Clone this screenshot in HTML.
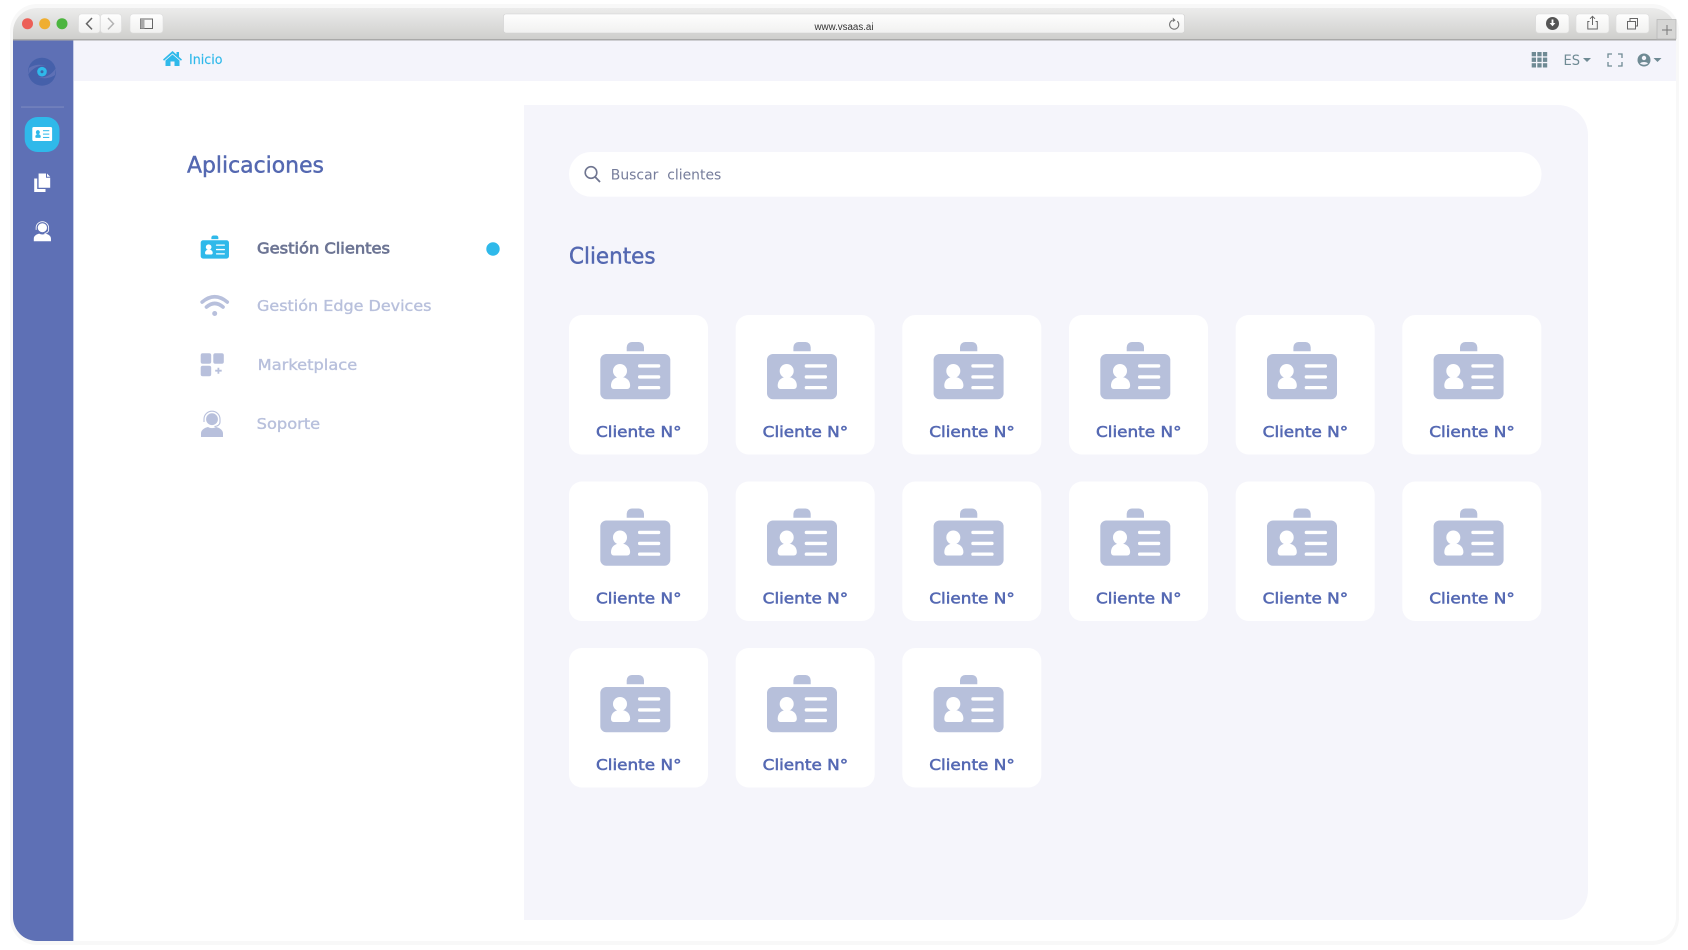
<!DOCTYPE html>
<html lang="es">
<head>
<meta charset="utf-8">
<title>vsaas</title>
<style>
html,body{margin:0;padding:0;background:#fff;width:1688px;height:950px;overflow:hidden}
svg{display:block}
text{font-family:"DejaVu Sans","Liberation Sans",sans-serif}
.cl{font-size:15.5px;fill:#5569b3;stroke:#5569b3;stroke-width:.55}
.m{font-size:15px;stroke-width:.35}
</style>
</head>
<body>
<svg xmlns="http://www.w3.org/2000/svg" width="1688" height="950" viewBox="0 0 1688 950">
<defs>
<linearGradient id="tb" x1="0" y1="0" x2="0" y2="1"><stop offset="0" stop-color="#ececec"/><stop offset="1" stop-color="#cfcfcd"/></linearGradient>
<linearGradient id="btn" x1="0" y1="0" x2="0" y2="1"><stop offset="0" stop-color="#fefefe"/><stop offset="1" stop-color="#f1f1f0"/></linearGradient>
<clipPath id="fr"><rect x="13" y="8" width="1663" height="933" rx="24"/></clipPath>
<g id="idc">
<rect x="0" y="0" width="70" height="45.3" rx="6" fill="currentColor"/>
<path d="M26.400-2.800v-4a5.200 5.200 0 0 1 5.200-5.200h6.900a5.200 5.200 0 0 1 5.200 5.200v4z" fill="currentColor"/>
<circle cx="19.700" cy="17" r="7" fill="var(--k)"/>
<path d="M10.700 31.500c0-5 3.500-8.500 9.500-8.500s9.600 3.500 9.600 8.500c0 2-1 3.500-3 3.500H13.500c-2 0-2.800-1.500-2.800-3.500z" fill="var(--k)"/>
<rect x="37.700" y="10.300" width="22.300" height="3.300" rx="1.600" fill="var(--k)"/>
<rect x="37.700" y="21.300" width="22.300" height="3.300" rx="1.600" fill="var(--k)"/>
<rect x="37.700" y="32" width="22.300" height="3.300" rx="1.600" fill="var(--k)"/>
</g>
<g id="sup">
<circle cx="11" cy="8.200" r="5.900" fill="currentColor"/>
<path d="M3 11V8.200a8 8 0 0 1 16 0V11c0 2.500-2.500 4.400-5.500 4.600" fill="none" stroke="currentColor" stroke-width="1.100"/>
<path d="M0 26v-3.500c0-3.800 3.800-5.800 7-6.500c2.500 1.500 5.500 1.500 8 0c3.200.7 7 2.700 7 6.500V26z" fill="currentColor"/>
</g>
<g id="card">
<rect width="139" height="139.500" rx="13" fill="#fff"/>
<use href="#idc" x="31.300" y="39" style="color:#b7c0db;--k:#fff"/>
</g>
</defs>

<!-- outer frame -->
<rect x="10" y="4" width="1669" height="941" rx="27" fill="#f8f8f8"/>
<g clip-path="url(#fr)">
<rect x="13" y="8" width="1663" height="933" fill="#fff"/>
<!-- title bar -->
<rect x="13" y="8" width="1663" height="31" fill="url(#tb)"/>
<rect x="13" y="39" width="1663" height="1.500" fill="#a9a9a8"/>
<!-- sidebar -->
<rect x="13" y="40.500" width="60" height="901" fill="#5e70b5"/>
<rect x="73" y="40.500" width="1" height="901" fill="#c5cce6"/>
<!-- top bar -->
<rect x="74" y="40.500" width="1602" height="40.500" fill="#f4f4fb"/>
</g>

<!-- traffic lights -->
<circle cx="27.500" cy="23.700" r="5.500" fill="#ec5f57"/>
<circle cx="44.700" cy="23.700" r="5.500" fill="#efae30"/>
<circle cx="62" cy="23.700" r="5.500" fill="#4cb53f"/>
<!-- nav buttons -->
<rect x="78.500" y="14" width="21.500" height="19" rx="3" fill="url(#btn)" stroke="#dcdcdc" stroke-width=".6"/>
<rect x="100.500" y="14" width="21" height="19" rx="3" fill="url(#btn)" stroke="#dcdcdc" stroke-width=".6"/>
<path d="M92 18l-5.500 5.700 5.500 5.700" fill="none" stroke="#666" stroke-width="1.500"/>
<path d="M108 18l5.500 5.700-5.500 5.700" fill="none" stroke="#b4b4b4" stroke-width="1.500"/>
<rect x="130" y="14" width="33" height="19" rx="3" fill="url(#btn)" stroke="#dcdcdc" stroke-width=".6"/>
<rect x="140.500" y="19" width="12" height="9.500" fill="none" stroke="#666" stroke-width="1"/>
<rect x="140.500" y="19" width="4" height="9.500" fill="#a9a9a9"/>
<!-- address bar -->
<rect x="503.500" y="14" width="681" height="19" rx="2.500" fill="url(#btn)" stroke="#d0d0d0" stroke-width=".6"/>
<text x="814.500" y="30" font-size="10" fill="#333" textLength="59" lengthAdjust="spacingAndGlyphs" style="font-family:'Liberation Sans',sans-serif">www.vsaas.ai</text>
<path d="M1172.500 20.300a4.600 4.600 0 1 0 4.800.9" fill="none" stroke="#777" stroke-width="1.100"/>
<path d="M1172.800 17.500l2.800 2.700-2.800 2z" fill="#777"/>
<!-- right browser buttons -->
<rect x="1535.700" y="14" width="33.300" height="19" rx="3" fill="url(#btn)" stroke="#dcdcdc" stroke-width=".6"/>
<rect x="1576" y="14" width="33" height="19" rx="3" fill="url(#btn)" stroke="#dcdcdc" stroke-width=".6"/>
<rect x="1616" y="14" width="33" height="19" rx="3" fill="url(#btn)" stroke="#dcdcdc" stroke-width=".6"/>
<circle cx="1552.500" cy="23.500" r="6.500" fill="#555"/>
<path d="M1551.600 19.500h1.800v3.500h2l-2.900 3.300-2.900-3.300h2z" fill="#fff"/>
<path d="M1589.500 21.500h-1.700v7.500h9.500v-7.500h-1.700" fill="none" stroke="#666" stroke-width="1"/>
<path d="M1592.500 25V16.500M1590 18.800l2.500-2.500 2.500 2.500" fill="none" stroke="#666" stroke-width="1"/>
<rect x="1627.500" y="21.500" width="8" height="7.500" fill="none" stroke="#666" stroke-width="1"/>
<path d="M1630 21.500V18.500h7.500v7.500h-2" fill="none" stroke="#666" stroke-width="1"/>
<!-- new tab -->
<rect x="1657" y="19.500" width="19" height="19.500" fill="#d6d6d5" stroke="#b6b6b6" stroke-width=".7"/>
<path d="M1667 25v10M1662 30h10" stroke="#777" stroke-width="1"/>

<!-- sidebar content -->
<circle cx="42" cy="71.700" r="14" fill="#4560aa"/>
<path d="M28 75c5-8 13-11 19-8.500-6-3-13-2-18 1.500z" fill="#5e70b5"/>
<path d="M56 68c-5 8-13 11-19 8.500 6 3 13 2 18-1.500z" fill="#5e70b5"/>
<circle cx="42" cy="71.700" r="4.800" fill="#2fb9ea"/>
<circle cx="42" cy="71.700" r="1.500" fill="#3a66a8"/>
<rect x="21" y="106.300" width="43" height="1.500" fill="#7483bd"/>
<rect x="24.700" y="117" width="34.800" height="35" rx="13" fill="#2fb9ea"/>
<g transform="translate(32.300 127) scale(.283 .31)"><rect width="70" height="45.300" rx="5" fill="#fff"/><circle cx="19.700" cy="17" r="7" fill="#2fb9ea"/><path d="M10.700 31.500c0-5 3.500-8.500 9.500-8.500s9.600 3.500 9.600 8.500c0 2-1 3.500-3 3.500H13.500c-2 0-2.800-1.500-2.800-3.500z" fill="#2fb9ea"/><rect x="37.700" y="10.300" width="22.300" height="3.300" fill="#2fb9ea"/><rect x="37.700" y="21.300" width="22.300" height="3.300" fill="#2fb9ea"/><rect x="37.700" y="32" width="22.300" height="3.300" fill="#2fb9ea"/></g>
<path d="M34.200 178.500h3v10.500h8.300v3h-11.300z" fill="#fff"/>
<path d="M38.600 173.500h7.400v4.300h4.200v10h-11.600z" fill="#fff"/>
<path d="M47 173.500l3.200 3.300h-3.200z" fill="#fff"/>
<use href="#sup" transform="translate(33.800 221.500) scale(.78 .76)" style="color:#fff"/>

<!-- top bar content -->
<path d="M172.500 51L163 59.500l1 1.200 8.500-7.200 8.500 7.200 1-1.200-3-2.600V52h-2.500v2.500zM165.500 60.500V66h5v-4.500h4V66h5v-5.500l-7-6z" fill="#2fb9ea"/>
<text x="189" y="64" font-size="13" fill="#2fb9ea" stroke="#2fb9ea" stroke-width=".15" textLength="33.500" lengthAdjust="spacingAndGlyphs">Inicio</text>
<g fill="#6f8a94">
<rect x="1531.700" y="52" width="4.300" height="4.300"/><rect x="1537.300" y="52" width="4.300" height="4.300"/><rect x="1542.900" y="52" width="4.300" height="4.300"/>
<rect x="1531.700" y="57.600" width="4.300" height="4.300"/><rect x="1537.300" y="57.600" width="4.300" height="4.300"/><rect x="1542.900" y="57.600" width="4.300" height="4.300"/>
<rect x="1531.700" y="63.200" width="4.300" height="4.300"/><rect x="1537.300" y="63.200" width="4.300" height="4.300"/><rect x="1542.900" y="63.200" width="4.300" height="4.300"/>
</g>
<text x="1563.500" y="65" font-size="14" fill="#6f8a94" textLength="16.500" lengthAdjust="spacingAndGlyphs">ES</text>
<path d="M1583 58h8l-4 4z" fill="#6f8a94"/>
<path d="M1612 54h-4v4M1618 54h4v4M1612 66h-4v-4M1618 66h4v-4" fill="none" stroke="#6f8a94" stroke-width="1.300"/>
<circle cx="1644" cy="60" r="6.500" fill="#6f8a94"/>
<circle cx="1644" cy="58" r="2.200" fill="#f4f4fb"/>
<path d="M1640 63.500c1-2 7-2 8 0-2 1.600-6 1.600-8 0z" fill="#f4f4fb"/>
<path d="M1653.500 58h8l-4 4z" fill="#6f8a94"/>

<!-- left menu -->
<text x="187" y="172.500" font-size="22" fill="#5468b1" stroke="#5468b1" stroke-width=".45" textLength="137" lengthAdjust="spacingAndGlyphs">Aplicaciones</text>
<use href="#idc" transform="translate(200.700 240.300) scale(.404)" style="color:#2fb9ea;--k:#fff"/>
<text class="m" x="257" y="253.300" fill="#6d7594" stroke="#6d7594" style="stroke-width:.7" textLength="133" lengthAdjust="spacingAndGlyphs">Gestión Clientes</text>
<circle cx="493" cy="249" r="6.700" fill="#2fb9ea"/>
<path d="M202.200 302Q214.700 291.500 227.200 302M206.500 307Q214.700 299.800 223 307" fill="none" stroke="#b8c0dc" stroke-width="3.700" stroke-linecap="round"/>
<circle cx="214.700" cy="313.500" r="2.500" fill="#b8c0dc"/>
<text class="m" x="257" y="311" fill="#b8c0dc" stroke="#b8c0dc" textLength="174.500" lengthAdjust="spacingAndGlyphs">Gestión Edge Devices</text>
<rect x="200.700" y="353.300" width="10.500" height="10.500" rx="2" fill="#b8c0dc"/>
<rect x="213.300" y="353.300" width="10.500" height="10.500" rx="2" fill="#b8c0dc"/>
<rect x="200.700" y="365.700" width="10.500" height="10.500" rx="2" fill="#b8c0dc"/>
<path d="M218.400 367.700v6M215.200 370.700h6.500" stroke="#b8c0dc" stroke-width="1.800"/>
<text class="m" x="257.700" y="369.800" fill="#b8c0dc" stroke="#b8c0dc" textLength="99.500" lengthAdjust="spacingAndGlyphs">Marketplace</text>
<use href="#sup" x="201" y="411" style="color:#b8c0dc"/>
<text class="m" x="256.700" y="429" fill="#b8c0dc" stroke="#b8c0dc" textLength="63.500" lengthAdjust="spacingAndGlyphs">Soporte</text>

<!-- main panel -->
<path d="M524 105H1558a30 30 0 0 1 30 30V890a30 30 0 0 1-30 30H524z" fill="#f5f5fb"/>
<rect x="569" y="152" width="972.500" height="44.700" rx="22" fill="#fff"/>
<circle cx="591" cy="172.500" r="5.800" fill="none" stroke="#6f7590" stroke-width="1.600"/>
<path d="M595.200 177l4.800 5" stroke="#6f7590" stroke-width="1.800"/>
<text x="610.800" y="179.500" font-size="14" fill="#767d9b" textLength="110.500" lengthAdjust="spacingAndGlyphs">Buscar&#160; clientes</text>
<text x="569" y="263.500" font-size="22" fill="#5468b1" stroke="#5468b1" stroke-width=".45" textLength="86.500" lengthAdjust="spacingAndGlyphs">Clientes</text>

<!-- cards row 1 -->
<use href="#card" x="569" y="315"/>
<use href="#card" x="735.700" y="315"/>
<use href="#card" x="902.300" y="315"/>
<use href="#card" x="1069" y="315"/>
<use href="#card" x="1235.700" y="315"/>
<use href="#card" x="1402.300" y="315"/>
<!-- row 2 -->
<use href="#card" x="569" y="481.500"/>
<use href="#card" x="735.700" y="481.500"/>
<use href="#card" x="902.300" y="481.500"/>
<use href="#card" x="1069" y="481.500"/>
<use href="#card" x="1235.700" y="481.500"/>
<use href="#card" x="1402.300" y="481.500"/>
<!-- row 3 -->
<use href="#card" x="569" y="648"/>
<use href="#card" x="735.700" y="648"/>
<use href="#card" x="902.300" y="648"/>

<text class="cl" x="596" y="437" textLength="85.500" lengthAdjust="spacingAndGlyphs">Cliente N°</text>
<text class="cl" x="762.700" y="437" textLength="85.500" lengthAdjust="spacingAndGlyphs">Cliente N°</text>
<text class="cl" x="929.300" y="437" textLength="85.500" lengthAdjust="spacingAndGlyphs">Cliente N°</text>
<text class="cl" x="1096" y="437" textLength="85.500" lengthAdjust="spacingAndGlyphs">Cliente N°</text>
<text class="cl" x="1262.700" y="437" textLength="85.500" lengthAdjust="spacingAndGlyphs">Cliente N°</text>
<text class="cl" x="1429.300" y="437" textLength="85.500" lengthAdjust="spacingAndGlyphs">Cliente N°</text>

<text class="cl" x="596" y="603.500" textLength="85.500" lengthAdjust="spacingAndGlyphs">Cliente N°</text>
<text class="cl" x="762.700" y="603.500" textLength="85.500" lengthAdjust="spacingAndGlyphs">Cliente N°</text>
<text class="cl" x="929.300" y="603.500" textLength="85.500" lengthAdjust="spacingAndGlyphs">Cliente N°</text>
<text class="cl" x="1096" y="603.500" textLength="85.500" lengthAdjust="spacingAndGlyphs">Cliente N°</text>
<text class="cl" x="1262.700" y="603.500" textLength="85.500" lengthAdjust="spacingAndGlyphs">Cliente N°</text>
<text class="cl" x="1429.300" y="603.500" textLength="85.500" lengthAdjust="spacingAndGlyphs">Cliente N°</text>

<text class="cl" x="596" y="770" textLength="85.500" lengthAdjust="spacingAndGlyphs">Cliente N°</text>
<text class="cl" x="762.700" y="770" textLength="85.500" lengthAdjust="spacingAndGlyphs">Cliente N°</text>
<text class="cl" x="929.300" y="770" textLength="85.500" lengthAdjust="spacingAndGlyphs">Cliente N°</text>
</svg>
</body>
</html>
